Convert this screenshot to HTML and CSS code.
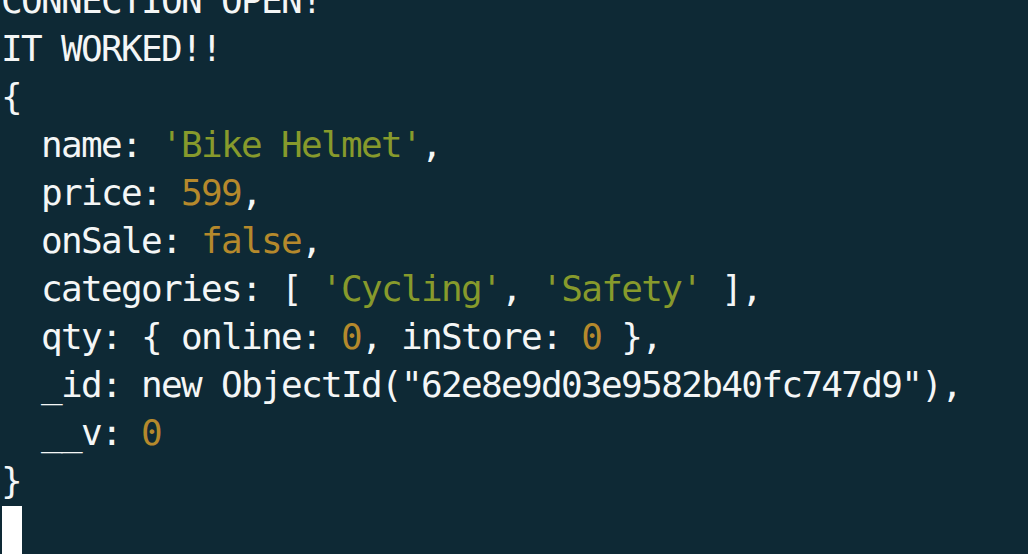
FILE: index.html
```html
<!DOCTYPE html>
<html lang="en">
<head>
  <meta charset="UTF-8" />
  <title>node index.js</title>
  <link rel="stylesheet" href="styles.css">
</head>
<body>
  <pre class="terminal">CONNECTION OPEN!
IT WORKED!!
{
  name: <span class="str">'Bike Helmet'</span>,
  price: <span class="num">599</span>,
  onSale: <span class="num">false</span>,
  categories: [ <span class="str">'Cycling'</span>, <span class="str">'Safety'</span> ],
  qty: { online: <span class="num">0</span>, inStore: <span class="num">0</span> },
  _id: new ObjectId("62e8e9d03e9582b40fc747d9"),
  __v: <span class="num">0</span>
}
<span class="cursor"></span></pre>
</body>
</html>
```

FILE: styles.css
```css
html, body {
  margin: 0;
  padding: 0;
  height: 100%;
  overflow: hidden;
  background-color: #0e2935;
}

.terminal {
  margin: -23px 0 0;
  padding: 0 0 0 1px;
  font-family: "DejaVu Sans Mono", monospace;
  font-size: 36px;
  letter-spacing: -1.67px;
  line-height: 48px;
  color: #f4f6f6;
}

.str {
  color: #879a2c;
}

.num {
  color: #b5892c;
}

.cursor {
  display: inline-block;
  width: 20px;
  height: 48px;
  margin-left: 1px;
  vertical-align: -13px;
  background-color: #ffffff;
}
```
